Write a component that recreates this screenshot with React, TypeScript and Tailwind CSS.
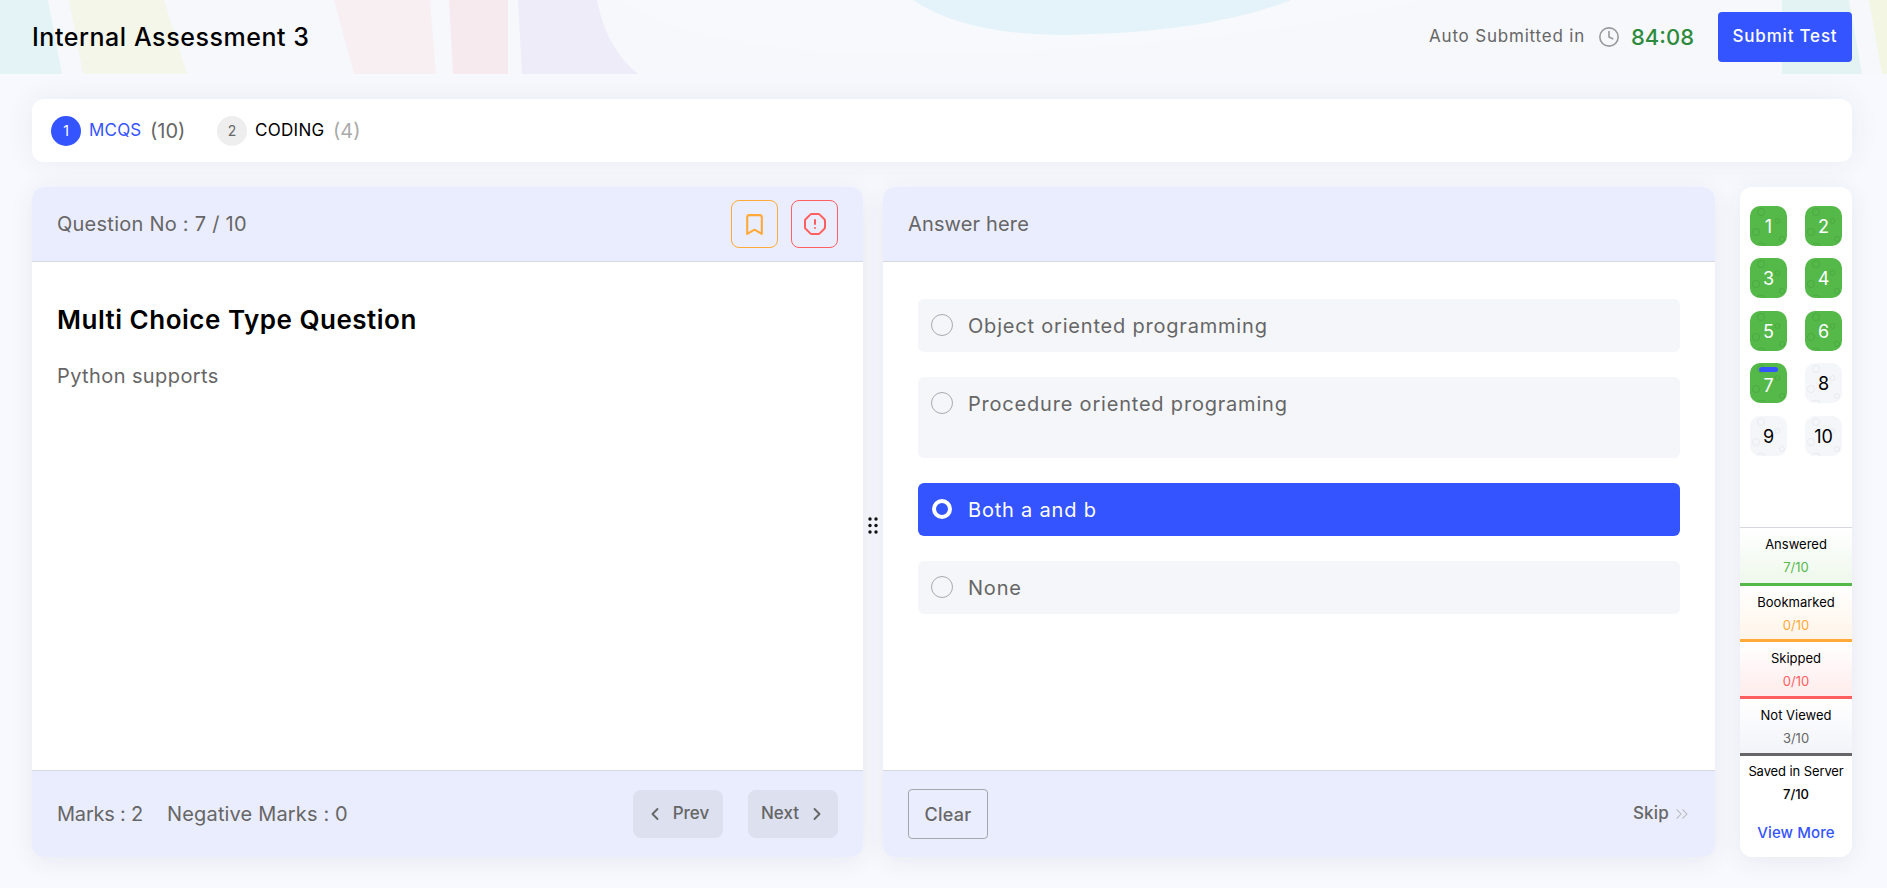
import { Bookmark, ChevronLeft, ChevronRight, ChevronsRight, Clock, OctagonAlert } from "lucide-react";

function Bubbles({ color }: { color: string }) {
  return (
    <svg className="absolute inset-0 h-full w-full" viewBox="0 0 37 40" fill="none" stroke={color} strokeWidth="1">
      <circle cx="11" cy="6" r="3.6" />
      <circle cx="27.5" cy="15" r="2.4" />
      <circle cx="6" cy="26" r="3.6" />
      <circle cx="32" cy="33" r="2.6" />
      <circle cx="11" cy="41" r="4" />
    </svg>
  );
}

function Num({ n, done, current, mt }: { n: number; done?: boolean; current?: boolean; mt?: string }) {
  return (
    <div
      className={`relative flex h-10 w-[37px] items-center justify-center overflow-hidden rounded-[10px] text-[18px] ${
        done ? "bg-[#54b949] text-white" : "bg-[#f5f6fa] text-black"
      } ${mt ?? ""}`}
    >
      <Bubbles color={done ? "#4caa42" : "#e8eaf1"} />
      {current && <span className="absolute left-[9px] top-[4px] h-[5px] w-[19px] rounded-full bg-[#3454ff]" />}
      <span className={`relative ${current ? "pt-[5px]" : ""}`}>{n}</span>
    </div>
  );
}

function Stat({ label, value, bar, text, from, h }: { label: string; value: string; bar: string; text: string; from: string; h: string }) {
  return (
    <div className={`flex flex-col items-center border-b-[3px] pt-[6px] ${bar} ${from} ${h}`}>
      <span className="text-[13px] leading-[20px] text-black">{label}</span>
      <span className={`mt-[3px] text-[13px] leading-[20px] ${text}`}>{value}</span>
    </div>
  );
}

function Option({ label, selected, tall }: { label: string; selected?: boolean; tall?: boolean }) {
  return (
    <div
      className={`flex items-start rounded-[6px] pl-[13px] pt-[15px] ${tall ? "h-[81px]" : "h-[53px]"} ${
        selected ? "bg-[#3454ff] text-white" : "bg-[#f5f6fa] text-[#666666]"
      }`}
    >
      {selected ? (
        <span className="ml-[1px] mt-[1px] h-[20px] w-[20px] rounded-full border-[4px] border-white bg-[#3454ff]" />
      ) : (
        <span className="h-[22px] w-[22px] rounded-full border border-[#aaaaaa] bg-transparent" />
      )}
      <span className={`text-[20px] leading-[24px] tracking-[0.8px] ${selected ? "ml-[16px]" : "ml-[15px]"}`}>{label}</span>
    </div>
  );
}

export default function App() {
  return (
    <div
      className="flex h-[888px] w-full flex-col overflow-hidden bg-[#f8f9fe] text-[#666666]"
      style={{ fontFamily: "Inter, 'Noto Sans', sans-serif" }}
    >
      <header className="relative flex h-[74px] shrink-0 items-center overflow-hidden bg-[#f7f8fc] pl-[32px] pr-[35px]">
        <svg className="absolute inset-0 h-[74px] w-full" viewBox="0 0 1887 74" preserveAspectRatio="none">
          <path d="M0 0H48L62 74H0Z" fill="#e3f3f6" />
          <path d="M69 0H164L187 74H83Z" fill="#f3f6e9" />
          <path d="M334 0H430L436 74H354Z" fill="#f7eff2" />
          <path d="M449 0H508V74H453Z" fill="#f7eaef" />
          <path d="M518 0H597C603 30 615 55 638 74H522Z" fill="#eeecf9" />
          <path d="M620 0C680 40 800 60 1000 52C1150 46 1300 30 1420 0Z" fill="#f8f9fd" />
          <path d="M913 0C950 25 1005 35 1063 35C1130 34 1220 28 1291 0Z" fill="#e3f3f9" />
          <path d="M1782 0H1849L1862 74H1782Z" fill="#e3f3f3" />
          <path d="M1869 0H1887V74H1882Z" fill="#f3f6e3" />
        </svg>
        <h1 className="relative text-[25px] font-medium leading-none tracking-[0.55px] text-black">Internal Assessment 3</h1>
        <div className="relative ml-auto flex items-center">
          <span className="text-[17px] tracking-[0.8px]">Auto Submitted in</span>
          <Clock className="ml-[13px] h-[22px] w-[22px] text-[#999999]" strokeWidth={1.75} />
          <span className="ml-[11px] text-[22px] font-medium text-[#2e8b3d]">84:08</span>
          <button className="ml-[24px] h-[50px] w-[134px] rounded-[4px] bg-[#3454ff] text-[17px] font-medium tracking-[0.8px] text-white">Submit Test</button>
        </div>
      </header>

      <div className="flex flex-1 flex-col pl-[32px] pr-[35px] pt-[25px]">
        <nav className="flex h-[63px] items-center rounded-[12px] bg-white pl-[19px] shadow-[0_0_30px_rgba(40,50,90,0.07)]">
          <span className="flex h-[30px] w-[30px] items-center justify-center rounded-full bg-[#3454ff] text-[14px] text-white">1</span>
          <span className="ml-[8px] w-[53px] text-[17px] tracking-[0.2px] text-[#3454ff]">MCQS</span>
          <span className="ml-[8px] w-[33px] text-[20px]">(10)</span>
          <span className="ml-[34px] flex h-[30px] w-[30px] items-center justify-center rounded-full bg-[#eeeeee] text-[14px]">2</span>
          <span className="ml-[8px] w-[70px] text-[17px] tracking-[0.3px] text-black">CODING</span>
          <span className="ml-[8px] text-[20px] text-[#aaaaaa]">(4)</span>
        </nav>

        <main className="mt-[25px] flex h-[670px] items-stretch">
          <section className="flex w-[831px] flex-col overflow-hidden rounded-[12px] bg-white shadow-[0_4px_24px_rgba(40,50,90,0.08)]">
            <div className="flex h-[75px] shrink-0 items-center justify-between border-b border-[#d6d8e0] bg-[#eaedfd] px-[25px]">
              <span className="text-[20px] tracking-[0.25px]">Question No : 7 / 10</span>
              <div className="flex gap-[13px]">
                <button className="flex h-[48px] w-[47px] items-center justify-center rounded-[8px] border border-[#ffa939]">
                  <Bookmark className="h-[25px] w-[25px] text-[#ffa939]" strokeWidth={2} />
                </button>
                <button className="flex h-[48px] w-[47px] items-center justify-center rounded-[8px] border border-[#ff5f5f]">
                  <OctagonAlert className="h-[24px] w-[24px] text-[#ff5f5f]" strokeWidth={2} />
                </button>
              </div>
            </div>
            <div className="flex-1 px-[25px] pt-[40px]">
              <h2 className="text-[26px] font-semibold leading-[36px] tracking-[0.5px] text-black">Multi Choice Type Question</h2>
              <p className="mt-[23px] text-[20px] leading-[30px] tracking-[0.4px]">Python supports</p>
            </div>
            <div className="flex h-[87px] shrink-0 items-center border-t border-[#d6d8e0] bg-[#eaedfd] px-[25px]">
              <span className="text-[20px] tracking-[-0.2px]">Marks : 2</span>
              <span className="ml-[24px] text-[20px] tracking-[0.15px]">Negative Marks : 0</span>
              <button className="ml-auto flex h-[48px] w-[90px] items-center justify-center rounded-[8px] bg-[#dde0ef] pr-[2px] text-[17px] font-medium">
                <ChevronLeft className="mr-[8px] h-[20px] w-[20px]" strokeWidth={2.25} />
                Prev
              </button>
              <button className="ml-[25px] flex h-[48px] w-[90px] items-center justify-center rounded-[8px] bg-[#dde0ef] pl-[2px] text-[17px] font-medium">
                Next
                <ChevronRight className="ml-[8px] h-[20px] w-[20px]" strokeWidth={2.25} />
              </button>
            </div>
          </section>

          <div className="relative z-10 flex w-[20px] shrink-0 items-center justify-center">
            <svg className="mt-[6px] h-[17px] w-[10px]" viewBox="0 0 10 17" fill="#111111">
              <circle cx="2" cy="2" r="1.7" />
              <circle cx="8" cy="2" r="1.7" />
              <circle cx="2" cy="8.5" r="1.7" />
              <circle cx="8" cy="8.5" r="1.7" />
              <circle cx="2" cy="15" r="1.7" />
              <circle cx="8" cy="15" r="1.7" />
            </svg>
          </div>

          <section className="flex w-[832px] flex-col overflow-hidden rounded-[12px] bg-white shadow-[0_4px_24px_rgba(40,50,90,0.08)]">
            <div className="flex h-[75px] shrink-0 items-center border-b border-[#d6d8e0] bg-[#eaedfd] pl-[25px]">
              <span className="text-[20px] tracking-[0.15px]">Answer here</span>
            </div>
            <div className="flex flex-1 flex-col gap-[25px] px-[35px] pt-[37px]">
              <Option label="Object oriented programming" />
              <Option label="Procedure oriented programing" tall />
              <Option label="Both a and b" selected />
              <Option label="None" />
            </div>
            <div className="flex h-[87px] shrink-0 items-center justify-between border-t border-[#d6d8e0] bg-[#eaedfd] pl-[25px] pr-[23px]">
              <button className="h-[50px] w-[80px] rounded-[4px] border border-[#a5a7ad] text-[18px] font-medium tracking-[0.3px]">Clear</button>
              <span className="flex items-center text-[17px] font-medium tracking-[0.2px]">
                Skip
                <ChevronsRight className="ml-[3px] h-[20px] w-[20px] text-[#b5b5bb]" strokeWidth={1.25} />
              </span>
            </div>
          </section>

          <aside className="ml-[25px] flex w-[112px] flex-col overflow-hidden rounded-[12px] bg-white shadow-[0_4px_24px_rgba(40,50,90,0.08)]">
            <div className="grid h-[340px] shrink-0 grid-cols-[37px_37px] content-start justify-between px-[10px] pt-[19px]">
              <Num n={1} done />
              <Num n={2} done />
              <Num n={3} done mt="mt-[12px]" />
              <Num n={4} done mt="mt-[12px]" />
              <Num n={5} done mt="mt-[13px]" />
              <Num n={6} done mt="mt-[13px]" />
              <Num n={7} done current mt="mt-[12px]" />
              <Num n={8} mt="mt-[12px]" />
              <Num n={9} mt="mt-[13px]" />
              <Num n={10} mt="mt-[13px]" />
            </div>
            <div className="border-t border-[#d6d8e0]">
              <Stat label="Answered" value="7/10" bar="border-[#54b949]" text="text-[#54b949]" from="bg-gradient-to-b from-white to-[#eef8ec]" h="h-[58px]" />
              <Stat label="Bookmarked" value="0/10" bar="border-[#ffa939]" text="text-[#ffa939]" from="bg-gradient-to-b from-white to-[#fff5e9]" h="h-[56px]" />
              <Stat label="Skipped" value="0/10" bar="border-[#ff5f5f]" text="text-[#ff5f5f]" from="bg-gradient-to-b from-white to-[#ffecec]" h="h-[57px]" />
              <Stat label="Not Viewed" value="3/10" bar="border-[#666666]" text="text-[#666666]" from="bg-gradient-to-b from-white to-[#f3f4fa]" h="h-[57px]" />
            </div>
            <div className="flex flex-1 flex-col items-center pt-[5px]">
              <span className="whitespace-nowrap text-[13px] leading-[20px] tracking-[-0.1px] text-black">Saved in Server</span>
              <span className="mt-[3px] text-[13px] font-medium leading-[20px] text-black">7/10</span>
              <span className="mt-[18px] text-[15px] font-medium leading-[22px] tracking-[0.1px] text-[#3454ff]">View More</span>
            </div>
          </aside>
        </main>
      </div>
    </div>
  );
}
